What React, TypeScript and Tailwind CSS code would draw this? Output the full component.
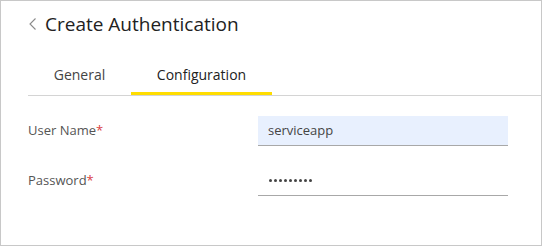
import React from "react";

export default function App() {
  return (
    <div
      className="w-[542px] h-[246px] border border-[#c8c8c8] bg-white box-border overflow-hidden"
      style={{ fontFamily: '"Open Sans", "Liberation Sans", sans-serif' }}
    >
      <div className="flex items-center pl-[28px] pt-[10px] h-[26px] box-content">
        <svg width="8" height="12" viewBox="0 0 8 12" className="mr-[8px]">
          <polyline points="6.5,0.5 1,6 6.5,11.5" fill="none" stroke="#8a8a8a" strokeWidth="1.1" />
        </svg>
        <span className="text-[19px] leading-[26px] text-[#222]">Create Authentication</span>
      </div>
      <div className="ml-[27px] mt-[19px] flex border-b border-[#d4d4d4]">
        <div className="w-[103px] h-[39px] flex items-center justify-center border-b-[3px] border-transparent text-[14px] text-[#444]">
          General
        </div>
        <div className="w-[141px] h-[39px] flex items-center justify-center border-b-[3px] border-[#ffdd00] text-[14px] text-[#222]">
          Configuration
        </div>
      </div>
      <div className="pl-[27px] pt-[20px] flex flex-col gap-[20px]">
        <div className="flex items-center">
          <div className="w-[230px] text-[13px] text-[#555]">
            User Name<span className="text-[#d9413f]">*</span>
          </div>
          <div className="w-[250px] h-[30px] bg-[#e8f0fe] border-b border-[#a8a8a8] flex items-center pl-[10px] text-[13px] text-[#444]">
            serviceapp
          </div>
        </div>
        <div className="flex items-center">
          <div className="w-[230px] text-[13px] text-[#555]">
            Password<span className="text-[#d9413f]">*</span>
          </div>
          <div className="w-[250px] h-[30px] border-b border-[#a8a8a8] flex items-center pl-[11px] gap-[2.5px]">
            {Array.from({ length: 9 }).map((_, i) => (
              <div key={i} className="w-[2.5px] h-[2.5px] rounded-full bg-[#444]" />
            ))}
          </div>
        </div>
      </div>
    </div>
  );
}
